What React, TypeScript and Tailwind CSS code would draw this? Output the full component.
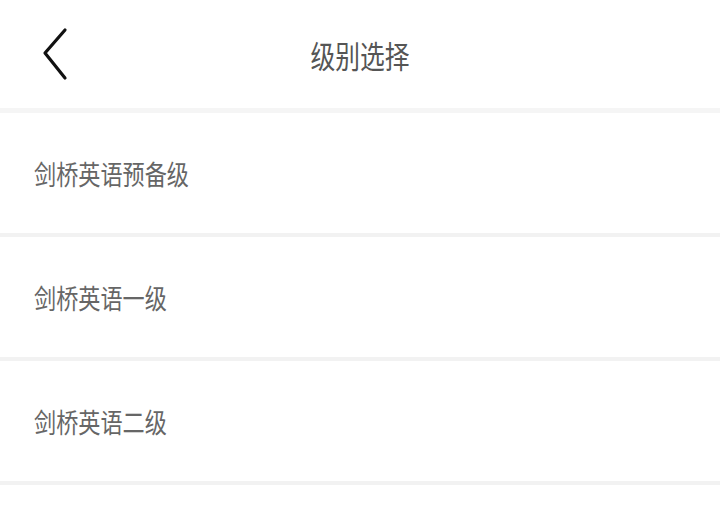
const levels = ["剑桥英语预备级", "剑桥英语一级", "剑桥英语二级"];

const cjk = { fontFamily: '"Noto Sans CJK SC", "Noto Sans", sans-serif' };

export default function App() {
  return (
    <div className="min-h-screen w-full bg-white" style={cjk}>
      <header className="relative flex h-[108px] items-center justify-center bg-white">
        <button className="absolute left-[40px] top-[26px] flex h-[56px] w-[32px] items-center justify-center">
          <svg width="32" height="56" viewBox="0 0 32 56" fill="none">
            <path
              d="M25 4 L5 27 L25 52"
              stroke="#111"
              strokeWidth="3.2"
              strokeLinecap="round"
              strokeLinejoin="round"
            />
          </svg>
        </button>
        <h1 className="origin-center scale-x-[0.8] text-[31px] font-normal leading-none text-[#555]">
          级别选择
        </h1>
      </header>
      <div className="h-[5px] bg-[#f5f5f5]" />
      <ul>
        {levels.map((label) => (
          <li key={label} className="border-b-[4px] border-[#f2f2f2]">
            <button className="flex h-[120px] w-full items-center pl-[34px] text-left">
              <span className="origin-left scale-x-[0.82] text-[27px] leading-none text-[#666]">
                {label}
              </span>
            </button>
          </li>
        ))}
      </ul>
    </div>
  );
}
